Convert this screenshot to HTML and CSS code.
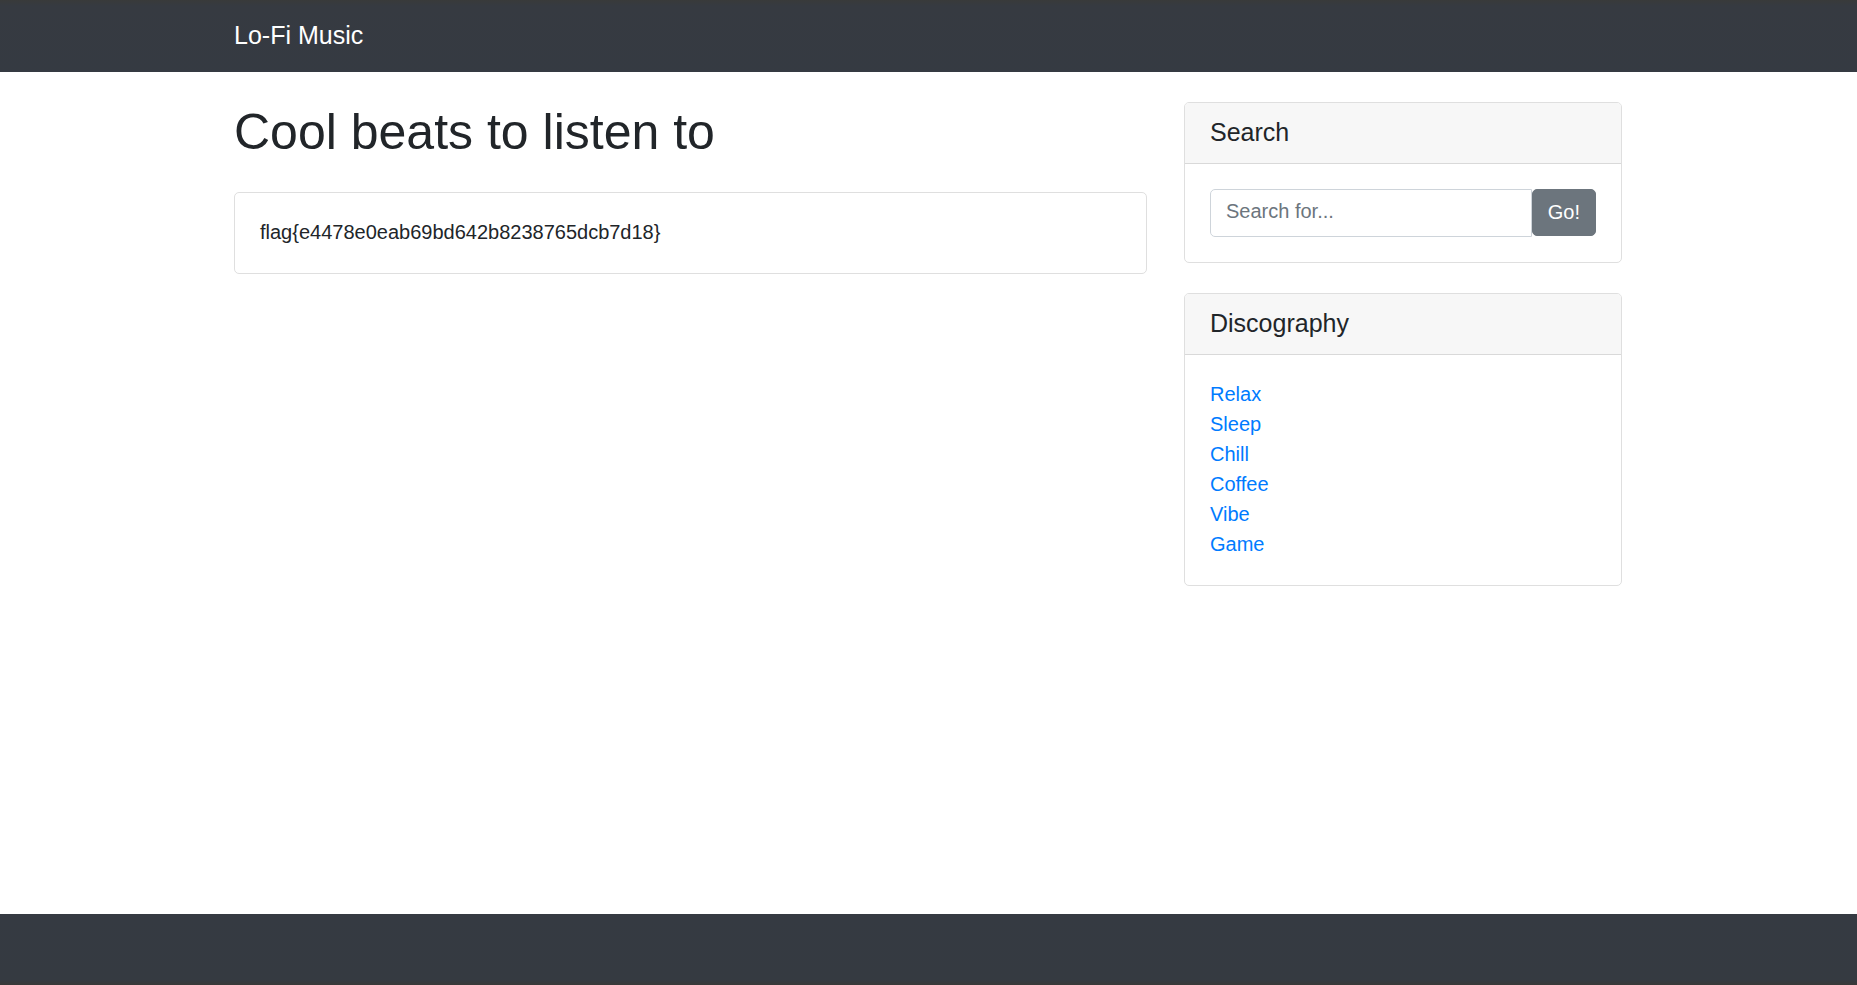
FILE: index.html
```html
<!DOCTYPE html>
<html lang="en">
<head>
<meta charset="utf-8">
<meta name="viewport" content="width=device-width, initial-scale=1">
<title>Lo-Fi Music</title>
<link rel="stylesheet" href="styles.css">
</head>
<body>
<nav class="navbar">
  <div class="container">
    <a class="brand" href="#">Lo-Fi Music</a>
  </div>
</nav>
<div class="container content">
  <main>
    <h1 class="page-title">Cool beats to listen to</h1>
    <div class="card">
      <div class="card-body">flag{e4478e0eab69bd642b8238765dcb7d18}</div>
    </div>
  </main>
  <aside class="sidebar">
    <section class="card">
      <h2 class="card-header">Search</h2>
      <form class="card-form">
        <input class="search-input" type="text" placeholder="Search for..." aria-label="Search for">
        <button class="search-button" type="button">Go!</button>
      </form>
    </section>
    <section class="card">
      <h2 class="card-header">Discography</h2>
      <div class="card-body">
        <ul class="links">
          <li><a href="#">Relax</a></li>
          <li><a href="#">Sleep</a></li>
          <li><a href="#">Chill</a></li>
          <li><a href="#">Coffee</a></li>
          <li><a href="#">Vibe</a></li>
          <li><a href="#">Game</a></li>
        </ul>
      </div>
    </section>
  </aside>
</div>
<footer class="footer"></footer>
</body>
</html>
```
FILE: styles.css
```css
*, *::before, *::after {
  box-sizing: border-box;
}

body {
  display: flex;
  flex-direction: column;
  min-height: 100vh;
  margin: 0;
  background: #fff;
  color: #212529;
  font: 20px/30px "Liberation Sans", Arial, sans-serif;
}

.container {
  width: 100%;
  max-width: 1425px;
  margin: 0 auto;
  padding: 0 19px 0 18px;
}

.navbar {
  padding: 10px 0 12px;
  background: linear-gradient(#393a3a, #363a41 6px, #353a42);
}

.brand {
  display: inline-block;
  padding: 6px 0;
  color: #fff;
  font-size: 25px;
  line-height: 38px;
  text-decoration: none;
}

.content {
  display: grid;
  grid-template-columns: minmax(0, 913fr) minmax(0, 438fr);
  gap: 37px;
  flex: 1;
  align-items: start;
}

.page-title {
  margin: 30px 0;
  font-size: 50px;
  font-weight: 400;
  line-height: 60px;
}

.card {
  border: 1px solid #dfdfdf;
  border-radius: 5px;
  background: #fff;
  overflow: hidden;
}

.sidebar {
  display: grid;
  gap: 30px;
  padding: 30px 0;
}

.card-header {
  margin: 0;
  padding: 14px 25px 16px;
  border-bottom: 1px solid #d9d9d9;
  background: #f7f7f7;
  font-size: 25px;
  font-weight: 400;
  line-height: 30px;
}

.card-body {
  padding: 24px 25px 26px;
}

.card-form {
  display: flex;
  align-items: flex-start;
  padding: 25px;
}

.search-input {
  flex: 1;
  min-width: 0;
  height: 48px;
  margin: 0;
  padding: 6px 15px 10px;
  border: 1px solid #ced4da;
  border-radius: 5px 0 0 5px;
  background: #fff;
  color: #495057;
  font: inherit;
}

.search-input::placeholder {
  color: #6c757d;
  opacity: 1;
}

.search-button {
  padding: 7px 15px 8px;
  border: 1px solid #6c757d;
  border-radius: 5px;
  background: #6c757d;
  color: #fff;
  font: inherit;
}

.links {
  margin: 0;
  padding: 0;
  list-style: none;
}

.links a {
  color: #007bff;
  text-decoration: none;
}

.footer {
  height: 71px;
  background: linear-gradient(#353a42, #353a41 66px, #393837);
}
```
